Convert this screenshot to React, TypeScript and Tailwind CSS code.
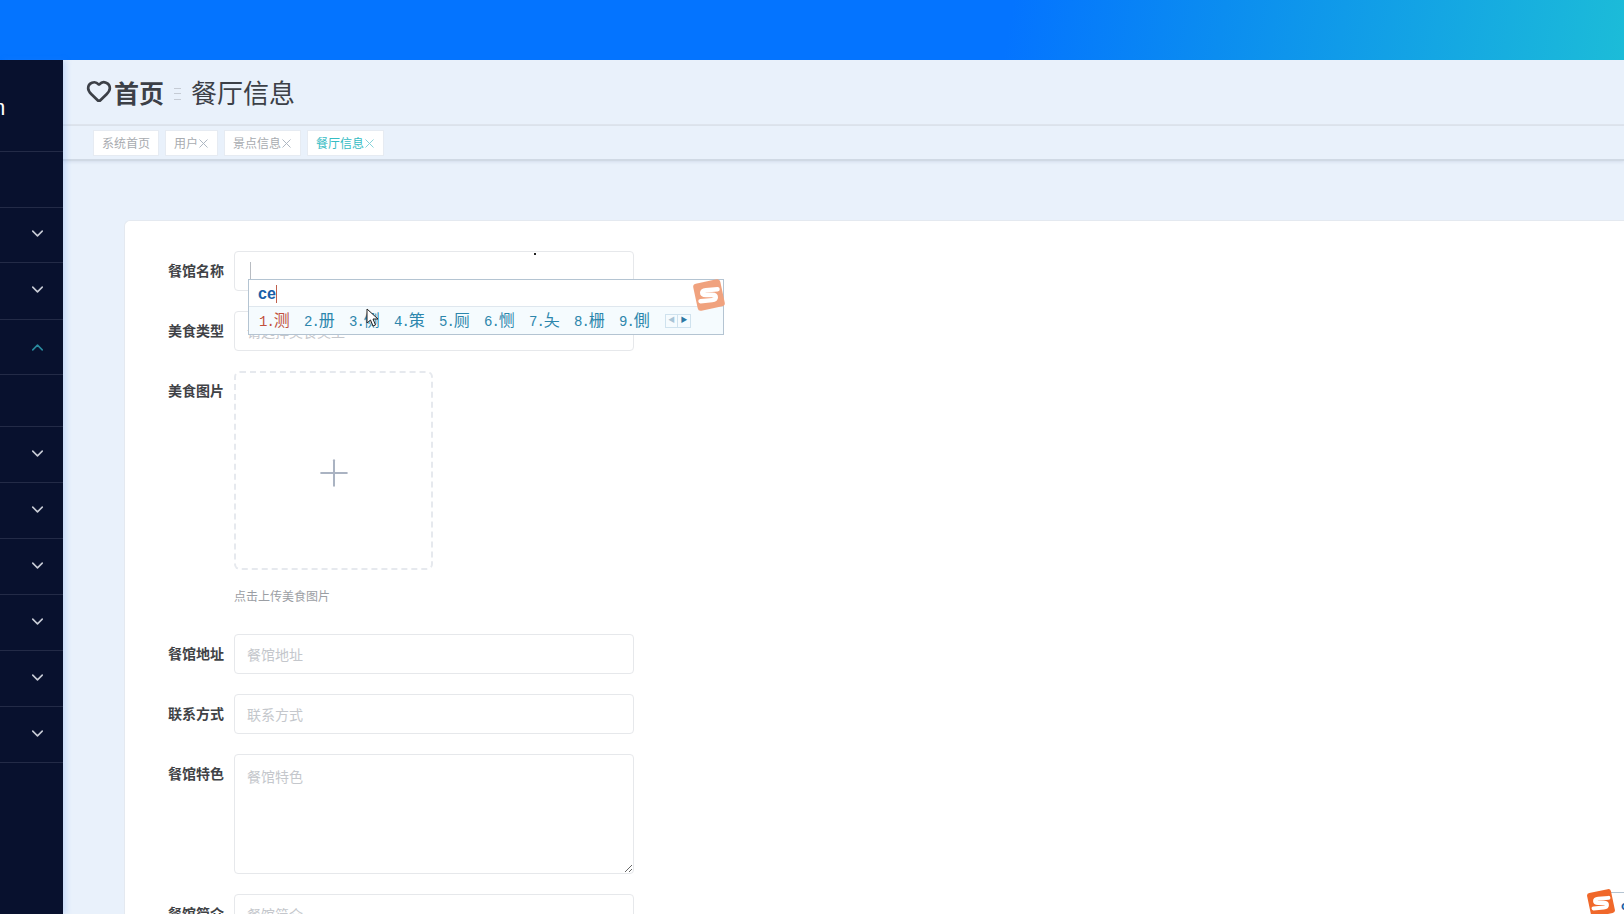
import { ChevronDown, ChevronUp, Heart, Plus, X } from "lucide-react";

const sidebarRows = [
  { h: "h-[56px]" },
  { h: "h-[55px]", chevron: "down" },
  { h: "h-[57px]", chevron: "down" },
  { h: "h-[55px]", chevron: "up" },
  { h: "h-[52px]" },
  { h: "h-[56px]", chevron: "down" },
  { h: "h-[56px]", chevron: "down" },
  { h: "h-[56px]", chevron: "down" },
  { h: "h-[56px]", chevron: "down" },
  { h: "h-[56px]", chevron: "down" },
  { h: "h-[56px]", chevron: "down" },
];

const tabs = [
  { name: "系统首页" },
  { name: "用户", close: true },
  { name: "景点信息", close: true },
  { name: "餐厅信息", close: true, active: true },
];

const candidates = ["测", "册", "侧", "策", "厕", "恻", "夨", "栅", "側"];

function SogouLogo({ className }: { className: string }) {
  return (
    <svg viewBox="0 0 32 32" className={className}>
      <rect x="3" y="3" width="26" height="26" rx="3" fill="currentColor" transform="rotate(-12 16 16)" />
      <path
        d="M24 10.5 L13 11.5 C8.5 12 8.5 16 13 16 L19 15.8 C23.5 15.8 23.5 20.5 19 20.8 L8 21.8"
        fill="none"
        stroke="white"
        strokeWidth="4.2"
        strokeLinecap="round"
      />
    </svg>
  );
}

function Field({ label, placeholder }: { label: string; placeholder: string }) {
  return (
    <div className="flex mb-[20px]">
      <label className="w-[90px] pr-[10px] text-right text-[14px] leading-[38px] font-bold text-[#404246] shrink-0">
        {label}
      </label>
      <input
        placeholder={placeholder}
        className="w-[400px] h-[40px] px-[12px] text-[14px] bg-white border border-[#e6e8eb] rounded-[4px] outline-none placeholder:text-[#c4c7cc]"
      />
    </div>
  );
}

export default function App() {
  return (
    <div className="h-[914px] overflow-hidden flex flex-col relative bg-[#e9f1fb] font-['Noto_Sans_CJK_SC','Noto_Sans',sans-serif]">
      {/* top bar */}
      <div className="h-[60px] shrink-0 bg-[linear-gradient(100deg,#0474ff_0%,#0474ff_62%,#0b8df0_75%,#1cbcd8_100%)]" />

      <div className="flex flex-1 min-h-0">
        {/* Sidebar */}
        <div className="w-[63px] shrink-0 bg-[#08112e] shadow-[3px_0_6px_rgba(60,130,240,0.2)] z-10 relative overflow-hidden">
          <div className="h-[92px] border-b border-[#232b47] relative">
            <span className="absolute left-[-13px] top-[33px] text-[22px] leading-[30px] text-white font-['Liberation_Sans',sans-serif]">
              m
            </span>
          </div>
          {sidebarRows.map((row, i) => (
            <div
              key={i}
              className={`${row.h} border-b border-[#232b47] flex items-center justify-end pr-[16px] ${
                row.chevron === "down" ? "pb-[3px]" : ""
              }`}
            >
              {row.chevron === "down" && <ChevronDown size={19} strokeWidth={2} className="text-[#c8ccd6]" />}
              {row.chevron === "up" && <ChevronUp size={19} strokeWidth={2} className="text-[#2a8a9e]" />}
            </div>
          ))}
        </div>

        <div className="flex-1 min-w-0 flex flex-col">
          {/* breadcrumb */}
          <div className="h-[66px] shrink-0 pl-[23px] flex items-center border-b-2 border-[#dfe5ee] text-[#3c4047]">
            <Heart size={26} strokeWidth={2.5} className="mt-[-3px]" />
            <span className="ml-[2px] text-[25px] font-bold leading-none">首页</span>
            <span className="ml-[10px] w-[7px] h-[12px] border-y border-[#c5cbd4] flex items-center mt-[3px]">
              <span className="block w-full h-px bg-[#c5cbd4]" />
            </span>
            <span className="ml-[10px] text-[26px] leading-none">餐厅信息</span>
          </div>

          {/* tabs */}
          <div className="h-[35px] shrink-0 pl-[30px] flex items-start gap-[6px] pt-[4px] border-b-2 border-[#d0d9e4] shadow-[0_1px_3px_rgba(150,165,190,0.25)]">
            {tabs.map((tab) => (
              <div
                key={tab.name}
                className={`h-[26px] px-[8px] flex items-center bg-white border border-[#e6ebf2] text-[12px] ${
                  tab.active ? "text-[#35bcc4]" : "text-[#a8abb0]"
                }`}
              >
                {tab.name}
                {tab.close && (
                  <X
                    size={15}
                    strokeWidth={1.5}
                    className={`mx-[-2px] ${tab.active ? "text-[#7fd0d8]" : "text-[#a9b3bf]"}`}
                  />
                )}
              </div>
            ))}
          </div>

          {/* form card */}
          <div className="flex-1 min-h-0 pl-[61px] pt-[59px] overflow-hidden">
            <div className="bg-white rounded-tl-[6px] border-t border-l border-[#e4e9f0] pt-[30px] pl-[19px] h-[800px]">
              <Field label="餐馆名称" placeholder="" />
              <Field label="美食类型" placeholder="请选择美食类型" />

              <div className="flex mb-[29px]">
                <label className="w-[90px] pr-[10px] text-right text-[14px] leading-[38px] font-bold text-[#404246] shrink-0">
                  美食图片
                </label>
                <div>
                  <div className="w-[199px] h-[199px] border-2 border-dashed border-[#e6e9ee] rounded-[6px] flex items-center justify-center">
                    <Plus size={44} strokeWidth={1.1} className="text-[#aab3c2] mt-[4px]" />
                  </div>
                  <div className="mt-[17px] text-[12px] leading-[18px] text-[#9b9ea4]">点击上传美食图片</div>
                </div>
              </div>

              <Field label="餐馆地址" placeholder="餐馆地址" />
              <Field label="联系方式" placeholder="联系方式" />

              <div className="flex mb-[20px]">
                <label className="w-[90px] pr-[10px] text-right text-[14px] leading-[38px] font-bold text-[#404246] shrink-0">
                  餐馆特色
                </label>
                <textarea
                  placeholder="餐馆特色"
                  className="block w-[400px] h-[120px] px-[12px] py-[11px] text-[14px] bg-white border border-[#e6e8eb] rounded-[4px] outline-none placeholder:text-[#c4c7cc]"
                />
              </div>

              <Field label="餐馆简介" placeholder="餐馆简介" />
            </div>
          </div>
        </div>
      </div>

      {/* text caret in the focused input */}
      <div className="absolute left-[250px] top-[262px] w-px h-[18px] bg-[#b8bcc2]" />
      <div className="absolute left-[534px] top-[253px] w-[2px] h-[2px] bg-[#222]" />

      {/* IME popup */}
      <div className="absolute left-[248px] top-[279px] w-[476px] h-[56px] bg-white border border-[#b4c4d2] font-['Liberation_Sans','Noto_Sans_CJK_SC',sans-serif]">
        <div className="h-[27px] pl-[9px] pt-[2px] flex items-center border-b border-[#dfe7ee]">
          <span className="text-[16px] font-bold text-[#1a5fa8] leading-none">ce</span>
          <span className="w-px h-[18px] bg-[#c0604c]" />
        </div>
        <div className="h-[27px] pl-[10px] flex items-center bg-[#f5fbfe]">
          {candidates.map((c, i) => (
            <span
              key={c}
              className={`w-[45px] shrink-0 flex items-baseline whitespace-nowrap leading-[20px] ${
                i === 0 ? "text-[#c2503c]" : "text-[#2c86ac]"
              }`}
            >
              <span className="text-[14px] tracking-[-1px] font-['Liberation_Mono',monospace]">{i + 1}.</span>
              <span className="text-[16px] font-['Noto_Sans_CJK_SC',sans-serif]">{c}</span>
            </span>
          ))}
          <div className="ml-[1px] flex h-[14px] border border-[#cfe2ee]">
            <span className="w-[12px] flex items-center justify-center text-[7px] text-[#a8c4d6] border-r border-[#cfe2ee]">◀</span>
            <span className="w-[12px] flex items-center justify-center text-[7px] text-[#2c78a4]">▶</span>
          </div>
        </div>
      </div>
      <SogouLogo className="absolute left-[692px] top-[278px] w-[34px] h-[34px] text-[#f0a27e]" />

      {/* mouse pointer */}
      <svg viewBox="0 0 14 20" className="absolute left-[366px] top-[308px] w-[14px] h-[20px]">
        <path d="M1 1 L1 15 L4.5 12 L7 18 L9.5 17 L7 11 L12 11 Z" fill="white" stroke="#222" strokeWidth="1" />
      </svg>

      {/* status bar of the IME, bottom right */}
      <div className="absolute left-[1600px] top-[892px] w-[24px] h-[22px] bg-white border-t border-[#b4c4d2]" />
      <SogouLogo className="absolute left-[1586px] top-[888px] w-[30px] h-[30px] text-[#f0682a]" />
      <span className="absolute left-[1621px] top-[899px] text-[12px] font-bold text-[#1a5fa8] leading-none">c</span>
    </div>
  );
}
